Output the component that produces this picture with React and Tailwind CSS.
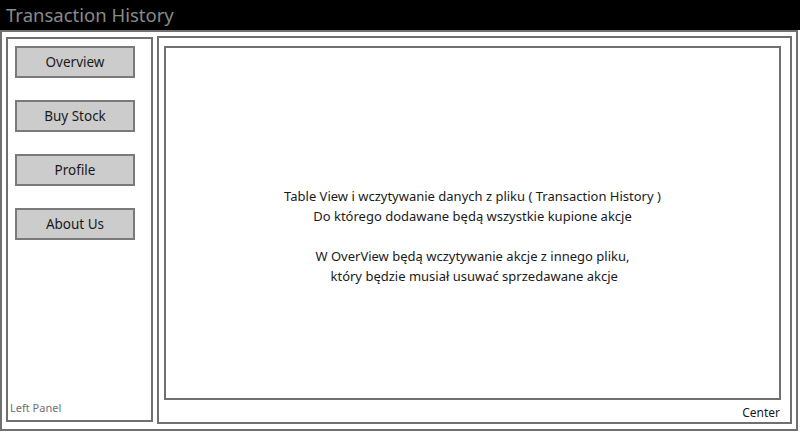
export default function App() {
  const btn = "w-[120px] h-[32px] border-2 border-[#7a7a7a] bg-[#cccccc] text-[13.5px] text-[#1a1a1a] flex items-center justify-center";
  return (
    <div className="w-[800px] h-[432px] bg-white flex flex-col overflow-hidden font-['Segoe_UI','Noto_Sans',sans-serif]">
      <div className="h-[30px] bg-black flex items-center pl-[6px]">
        <span className="text-[18.5px] text-[#8a8a8a] leading-none">Transaction History</span>
      </div>
      <div className="h-[401px] w-[798px] border-2 border-[#707070] flex">
        <div className="ml-[4px] mt-[5px] w-[147px] h-[385px] border-2 border-[#707070] flex flex-col relative">
          <div className="pl-[7px] pt-[7px] flex flex-col gap-[22px]">
            <div className={btn}>Overview</div>
            <div className={btn}>Buy Stock</div>
            <div className={btn}>Profile</div>
            <div className={btn}>About Us</div>
          </div>
          <div className="mt-auto pl-[2px] pb-[4px] text-[11px] text-[#707070]">Left Panel</div>
        </div>
        <div className="ml-[4px] mt-[4px] w-[635px] h-[388px] border-2 border-[#707070] flex flex-col">
          <div className="ml-[5px] mt-[8px] w-[617px] h-[354px] border-2 border-[#707070] flex flex-col items-center pt-[138px] text-[13px] text-[#1a1a1a] leading-[20px] text-center">
            <div>Table View i wczytywanie danych z pliku ( Transaction History )</div>
            <div>Do którego dodawane będą wszystkie kupione akcje</div>
            <div className="h-[20px]"></div>
            <div>W OverView będą wczytywanie akcje z innego pliku,</div>
            <div>&nbsp;który będzie musiał usuwać sprzedawane akcje</div>
          </div>
          <div className="mt-auto self-end pr-[10px] pb-[0px] text-[12px] text-[#1a1a1a]">Center</div>
        </div>
      </div>
    </div>
  );
}
